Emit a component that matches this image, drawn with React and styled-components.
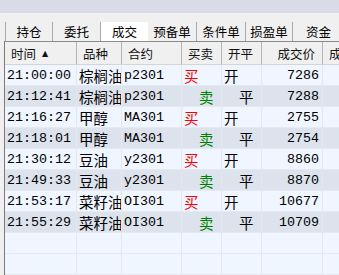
import React from 'react'
import { styled, createGlobalStyle } from 'styled-components'

const GlobalStyle = createGlobalStyle`
  html, body {
    margin: 0;
    padding: 0;
    background: #f0f0f0;
    overflow: hidden;
  }
  body {
    width: 339px;
    height: 275px;
  }
`;

const tabs = ['持仓', '委托', '成交', '预备单', '条件单', '损盈单', '资金'];
const tabWidths = [48, 48, 47, 49, 49, 47, 52];

const columns = [
  { title: '时间', width: 72, sort: true },
  { title: '品种', width: 45 },
  { title: '合约', width: 60 },
  { title: '买卖', width: 40 },
  { title: '开平', width: 40 },
  { title: '成交价', width: 61, right: true },
  { title: '成交量', width: 80 },
];

const trades = [
  { time: '21:00:00', name: '棕榈油', code: 'p2301', buy: true, open: true, price: 7286 },
  { time: '21:12:41', name: '棕榈油', code: 'p2301', buy: false, open: false, price: 7288 },
  { time: '21:16:27', name: '甲醇', code: 'MA301', buy: true, open: true, price: 2755 },
  { time: '21:18:01', name: '甲醇', code: 'MA301', buy: false, open: false, price: 2754 },
  { time: '21:30:12', name: '豆油', code: 'y2301', buy: true, open: true, price: 8860 },
  { time: '21:49:33', name: '豆油', code: 'y2301', buy: false, open: false, price: 8870 },
  { time: '21:53:17', name: '菜籽油', code: 'OI301', buy: true, open: true, price: 10677 },
  { time: '21:55:29', name: '菜籽油', code: 'OI301', buy: false, open: false, price: 10709 },
];

const template = columns.map(c => `${c.width}px`).join(' ');

function App() {
  const blanks = [0, 1];

  return (
    <Page>
      <GlobalStyle />
      <TitleBand />
      <TabBar>
        {tabs.map((t, i) => (
          <Tab key={t} $w={tabWidths[i]} $first={i === 0} $active={t === '成交'}>{t}</Tab>
        ))}
      </TabBar>
      <Grid>
        <HeaderRow>
          {columns.map(c => (
            <HeadCell key={c.title} $right={c.right}>
              {c.title}
              {c.sort && <SortMark>▲</SortMark>}
            </HeadCell>
          ))}
        </HeaderRow>
        {trades.map((r, i) => (
          <Row key={r.time} $alt={i % 2 === 1}>
            <Cell>{r.time}</Cell>
            <Cell $cjk>{r.name}</Cell>
            <Cell>{r.code}</Cell>
            <Cell $cjk $color={r.buy ? '#ff0000' : '#008000'} $indent={!r.buy}>{r.buy ? '买' : '卖'}</Cell>
            <Cell $cjk $indent={!r.open}>{r.open ? '开' : '平'}</Cell>
            <Cell $right>{r.price}</Cell>
            <Cell />
          </Row>
        ))}
        {blanks.map(b => (
          <Row key={b} $alt={false}>
            {columns.map(c => <Cell key={c.title} />)}
          </Row>
        ))}
      </Grid>
    </Page>
  )
}

const Page = styled.div`
  width: 339px;
  height: 275px;
  overflow: hidden;
  background: #f0f0f0;
  display: flex;
  flex-direction: column;
`;

const TitleBand = styled.div`
  height: 13px;
  flex: none;
  background: #d9dbe6;
  margin-bottom: 9px;
`;

const TabBar = styled.div`
  display: flex;
  height: 19px;
  flex: none;
  margin-left: 5px;
  white-space: nowrap;
`;

const Tab = styled.div`
  flex: none;
  width: ${p => p.$w}px;
  box-sizing: border-box;
  display: flex;
  align-items: center;
  justify-content: center;
  background: ${p => (p.$active ? '#ffffff' : 'transparent')};
  border-right: ${p => (p.$active ? 'none' : '1px solid #a9a9a9')};
  border-left: ${p => (p.$first ? '1px solid #a9a9a9' : 'none')};
  font-family: "Noto Sans CJK SC", sans-serif;
  font-size: 12.5px;
  color: #000;
`;

const Grid = styled.div`
  margin-left: 4px;
  border-left: 1px solid #7a7a7a;
  border-top: 1px solid #8c8c8c;
  background: #f0f6ff;
  flex: 1;
`;

const HeaderRow = styled.div`
  display: grid;
  grid-template-columns: ${template};
  height: 23px;
  background: #f0f0f0;
  border-bottom: 1px solid #d5d5d5;
  box-sizing: border-box;
`;

const HeadCell = styled.div`
  display: flex;
  align-items: center;
  justify-content: ${p => (p.$right ? 'flex-end' : 'flex-start')};
  padding: 0 ${p => (p.$right ? '7px' : '0')} 0 ${p => (p.$right ? '0' : '6px')};
  border-right: 1px solid #b4b4b4;
  box-sizing: border-box;
  font-family: "Noto Sans CJK SC", sans-serif;
  font-size: 12.5px;
  color: #111;
  white-space: nowrap;
  overflow: hidden;
`;

const SortMark = styled.span`
  font-family: "DejaVu Sans", sans-serif;
  font-size: 8px;
  margin-left: 6px;
`;

const Row = styled.div`
  display: grid;
  grid-template-columns: ${template};
  height: 21px;
  background: ${p => (p.$alt ? '#dde3ec' : '#f0f6ff')};
  border-bottom: 1px solid #e6eaf0;
  box-sizing: border-box;
`;

const Cell = styled.div`
  display: flex;
  align-items: center;
  justify-content: ${p => (p.$right ? 'flex-end' : 'flex-start')};
  padding: 0 ${p => (p.$right ? '3px' : '0')} 0 ${p => (p.$indent ? '17px' : p.$right ? '0' : '2px')};
  border-right: 1px solid #e4e8ee;
  box-sizing: border-box;
  font-family: ${p => (p.$cjk ? '"Noto Sans CJK SC", sans-serif' : '"Liberation Mono", monospace')};
  font-size: ${p => (p.$cjk ? '14.5px' : '13.33px')};
  color: ${p => p.$color || '#000'};
  white-space: nowrap;
  overflow: hidden;
`;

export default App
